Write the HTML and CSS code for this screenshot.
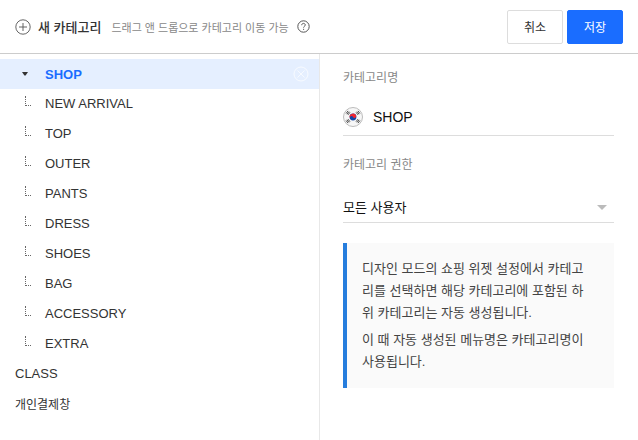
FILE: index.html
```html
<!DOCTYPE html>
<html lang="ko">
<head>
  <meta charset="UTF-8" />
  <meta name="viewport" content="width=device-width, initial-scale=1" />
  <title>카테고리 관리</title>
  <link rel="stylesheet" href="styles.css">
</head>
<body>
  <header class="toolbar">
    <button type="button" class="add-btn">
      <svg width="16" height="16" viewBox="0 0 16 16" fill="none" stroke="#555">
        <circle cx="8" cy="8" r="7.2" stroke-width="0.9" />
        <path d="M8 4v8M4 8h8" stroke-width="0.9" />
      </svg>
      새 카테고리
    </button>
    <span class="hint">드래그 앤 드롭으로 카테고리 이동 가능</span>
    <button type="button" class="help-btn" aria-label="도움말">
      <svg width="13" height="13" viewBox="0 0 13 13" fill="none" stroke="#555">
        <circle cx="6.5" cy="6.5" r="5.7" />
        <path d="M4.7 5.2c0-1.1.8-1.8 1.8-1.8s1.8.7 1.8 1.6c0 1.2-1.7 1.3-1.7 2.6" />
        <path d="M6.6 8.8v1.1" />
      </svg>
    </button>
    <div class="actions">
      <button type="button" class="btn">취소</button>
      <button type="submit" form="category-form" class="btn primary">저장</button>
    </div>
  </header>

  <main class="content">
    <!-- 카테고리 목록 -->
    <nav class="tree">
      <ul>
        <li>
          <div class="row selected">
            <button type="button" class="toggle" aria-label="접기">
              <svg width="6" height="4" viewBox="0 0 6 4"><path d="M0 0h6L3.6 3.4H2.4z" fill="#333" /></svg>
            </button>
            <a href="#shop">SHOP</a>
            <button type="button" class="delete-btn" aria-label="삭제">
              <svg width="16" height="16" viewBox="0 0 16 16" fill="none" stroke="#fff" stroke-opacity="0.7">
                <circle cx="8" cy="8" r="7" />
                <path d="M4.5 4.5l7 7M11.5 4.5l-7 7" />
              </svg>
            </button>
          </div>
          <ul>
            <li class="row child"><span class="branch"></span><a href="#new-arrival">NEW ARRIVAL</a></li>
            <li class="row child"><span class="branch"></span><a href="#top">TOP</a></li>
            <li class="row child"><span class="branch"></span><a href="#outer">OUTER</a></li>
            <li class="row child"><span class="branch"></span><a href="#pants">PANTS</a></li>
            <li class="row child"><span class="branch"></span><a href="#dress">DRESS</a></li>
            <li class="row child"><span class="branch"></span><a href="#shoes">SHOES</a></li>
            <li class="row child"><span class="branch"></span><a href="#bag">BAG</a></li>
            <li class="row child"><span class="branch"></span><a href="#accessory">ACCESSORY</a></li>
            <li class="row child"><span class="branch"></span><a href="#extra">EXTRA</a></li>
          </ul>
        </li>
        <li class="row"><a href="#class">CLASS</a></li>
        <li class="row"><a href="#payment" class="korean">개인결제창</a></li>
      </ul>
    </nav>

    <!-- 카테고리 설정 -->
    <form class="settings" id="category-form">
      <label for="category-name">카테고리명</label>
      <div class="field name-field">
        <svg class="flag" width="20" height="20" viewBox="0 0 20 20">
          <circle cx="10" cy="10" r="9.5" fill="#f7f7f7" stroke="#bbb" />
          <circle cx="10" cy="10" r="3.4" fill="#1447a8" />
          <path d="M6.9 11.4a3.4 3.4 0 1 1 6.2-2.8 1.7 1.7 0 0 1-3.1 1.4 1.7 1.7 0 0 0-3.1 1.4z" fill="#f0252f" />
          <g stroke="#444" stroke-width="0.9">
            <path d="M3 6.5l2-2.6M4 7.2l2-2.6M5 7.9l2-2.6" />
            <path d="M13 5.3l2 2.6M14 4.6l2 2.6M15 3.9l2 2.6" />
            <path d="M3 13.5l2 2.6M4 12.8l2 2.6M5 12.1l2 2.6" />
            <path d="M13 14.7l2-2.6M14 15.4l2-2.6M15 16.1l2-2.6" />
          </g>
        </svg>
        <input type="text" id="category-name" value="SHOP">
      </div>

      <label for="category-auth">카테고리 권한</label>
      <div class="field select-field">
        <select id="category-auth">
          <option selected>모든 사용자</option>
        </select>
        <svg width="10" height="5" viewBox="0 0 10 5"><path d="M0 0h10L5 5z" fill="#bbb" /></svg>
      </div>

      <div class="notice">
        <p>디자인 모드의 쇼핑 위젯 설정에서 카테고리를 선택하면 해당 카테고리에 포함된 하위 카테고리는 자동 생성됩니다.</p>
        <p>이 때 자동 생성된 메뉴명은 카테고리명이 사용됩니다.</p>
      </div>
    </form>
  </main>
</body>
</html>
```

FILE: styles.css
```css
* {
  box-sizing: border-box;
}
body {
  margin: 0;
  min-height: 100vh;
  display: flex;
  flex-direction: column;
  font-family: "Liberation Sans", "Noto Sans CJK KR", sans-serif;
  font-size: 13px;
  color: #333;
  background-color: #fff;
}
button, input, select {
  font-family: inherit;
  font-size: 13px;
  color: inherit;
}
button {
  padding: 0;
  border: none;
  background: none;
  cursor: pointer;
}
svg {
  display: block;
  flex-shrink: 0;
}
ul {
  list-style: none;
  margin: 0;
  padding: 0;
}
a {
  color: inherit;
  text-decoration: none;
}

/* toolbar */
.toolbar {
  display: flex;
  align-items: center;
  height: 54px;
  padding: 0 15px;
  border-bottom: 1px solid #ccc;
}
.add-btn {
  display: flex;
  align-items: center;
  gap: 7px;
  font-weight: 500;
}
.hint {
  margin-left: 10px;
  font-size: 11px;
  color: #888;
}
.help-btn {
  margin-left: 8px;
}
.actions {
  display: flex;
  gap: 4px;
  margin-left: auto;
}
.btn {
  width: 56px;
  height: 34px;
  border: 1px solid #ddd;
  border-radius: 2px;
  font-size: 12px;
  background-color: #fff;
}
.btn.primary {
  border-color: #1a6dff;
  background-color: #1a6dff;
  color: #fff;
}

/* category tree */
.content {
  flex: 1;
  display: grid;
  grid-template-columns: 320px 1fr;
}
.tree {
  padding-top: 5px;
  border-right: 1px solid #e8e8e8;
}
.row {
  display: flex;
  align-items: center;
  height: 30px;
  padding: 0 10px 2px 15px;
}
.selected {
  padding-bottom: 0;
  background-color: #e5efff;
  color: #1a6dff;
  font-weight: bold;
}
.toggle {
  display: flex;
  justify-content: center;
  width: 20px;
  margin-right: 10px;
}
.delete-btn {
  margin-left: auto;
}
.child {
  padding-left: 25px;
}
.branch {
  width: 6px;
  height: 10px;
  margin: 0 14px 4px 0;
  border-left: 1px dotted #666;
  border-bottom: 1px dotted #666;
}
.korean {
  font-size: 12px;
}

/* settings */
.settings {
  padding: 14px 24px 20px 23px;
}
.settings label {
  display: block;
  font-size: 12px;
  line-height: 20px;
  color: #888;
}
.field {
  display: flex;
  align-items: center;
  border-bottom: 1px solid #ddd;
}
.field input,
.field select {
  flex: 1;
  min-width: 0;
  padding: 0;
  border: none;
  outline: none;
  background: none;
  color: #111;
}
.name-field {
  gap: 10px;
  height: 38px;
  margin: 10px 0 19px;
}
.name-field input {
  font-size: 14px;
}
.select-field {
  height: 31px;
  margin: 17px 0 20px;
  padding-right: 7px;
}
.select-field select {
  appearance: none;
}
.notice {
  padding: 15px 20px 15px 15px;
  border-left: 4px solid #267ddd;
  background-color: #fafafa;
  line-height: 22px;
  color: #444;
}
.notice p {
  margin: 0;
}
.notice p + p {
  margin-top: 5px;
}
```
